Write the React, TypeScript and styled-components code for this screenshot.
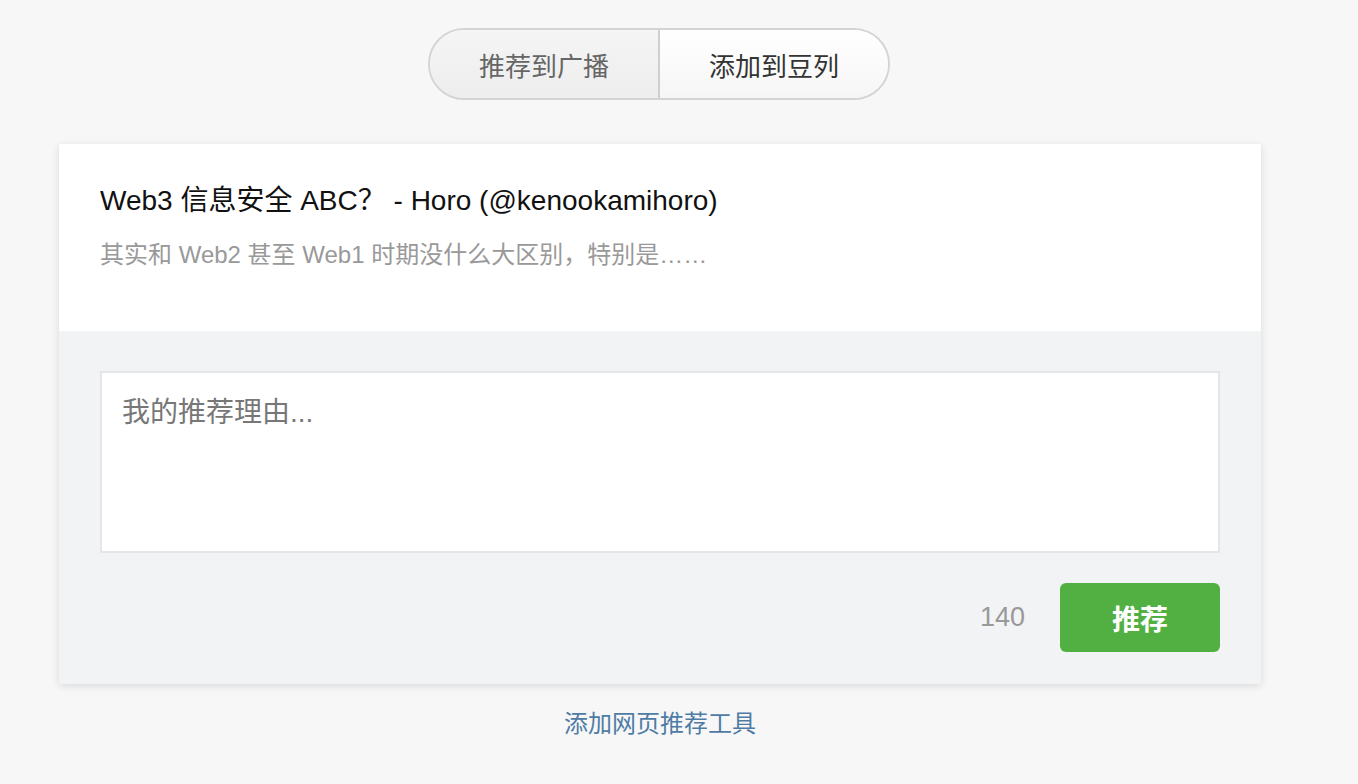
import React, { useState } from 'react'
import styled, { createGlobalStyle } from 'styled-components'

const GlobalStyle = createGlobalStyle`
  html, body {
    margin: 0;
    padding: 0;
    background: #f7f7f7;
    font-family: "Liberation Sans", "Noto Sans CJK SC", sans-serif;
  }
  * { box-sizing: border-box; }
`

const Page = styled.div`
  width: 1320px;
  height: 784px;
  display: flex;
  flex-direction: column;
  align-items: center;
  padding-top: 28px;
`

const Tabs = styled.div`
  display: flex;
  width: 462px;
  height: 72px;
  border: 2px solid #d4d4d4;
  border-radius: 36px;
  overflow: hidden;
  margin-left: -2px;
`

const Tab = styled.button<{ active: boolean }>`
  flex: 1;
  border: none;
  margin: 0;
  padding: 0;
  font-family: inherit;
  font-size: 26px;
  cursor: pointer;
  color: ${(p) => (p.active ? '#333' : '#666')};
  background: ${(p) =>
    p.active ? 'linear-gradient(#fff, #f6f6f6)' : 'linear-gradient(#f5f5f5, #ededed)'};
  & + & {
    border-left: 2px solid #cfcfcf;
  }
`

const Card = styled.div`
  margin-top: 44px;
  width: 1202px;
  background: #f2f3f5;
  box-shadow: 0 2px 8px rgba(0, 0, 0, 0.12);
`

const Preview = styled.div`
  height: 187px;
  background: #fff;
  padding: 39px 41px 0;
`

const Title = styled.div`
  font-size: 28px;
  color: #111;
  line-height: 36px;
`

const Summary = styled.div`
  margin-top: 20px;
  font-size: 24px;
  color: #999;
  line-height: 32px;
`

const Form = styled.div`
  padding: 40px 41px 32px;
`

const Reason = styled.textarea`
  display: block;
  width: 100%;
  height: 182px;
  resize: none;
  border: 2px solid #e3e5e8;
  background: #fff;
  padding: 22px 20px;
  font-family: inherit;
  font-size: 28px;
  line-height: 36px;
  color: #333;
  outline: none;
  &::placeholder {
    color: #777;
  }
`

const Footer = styled.div`
  display: flex;
  justify-content: flex-end;
  align-items: center;
  margin-top: 30px;
  gap: 35px;
`

const Count = styled.span`
  font-size: 27px;
  color: #999;
`

const Submit = styled.button`
  width: 160px;
  height: 69px;
  border: none;
  border-radius: 6px;
  background: #52b043;
  color: #fff;
  font-family: inherit;
  font-size: 28px;
  font-weight: bold;
  cursor: pointer;
`

const ToolLink = styled.a`
  margin-top: 20px;
  font-size: 24px;
  color: #4f7ca5;
  text-decoration: none;
`

export default function App() {
  const [tab, setTab] = useState(1)
  const [text, setText] = useState('')
  return (
    <Page>
      <GlobalStyle />
      <Tabs>
        <Tab active={tab === 0} onClick={() => setTab(0)}>推荐到广播</Tab>
        <Tab active={tab === 1} onClick={() => setTab(1)}>添加到豆列</Tab>
      </Tabs>
      <Card>
        <Preview>
          <Title>Web3 信息安全 ABC？ - Horo (@kenookamihoro)</Title>
          <Summary>其实和 Web2 甚至 Web1 时期没什么大区别，特别是……</Summary>
        </Preview>
        <Form>
          <Reason
            placeholder='我的推荐理由...'
            value={text}
            onChange={(e) => setText(e.target.value)}
          />
          <Footer>
            <Count>{140 - text.length}</Count>
            <Submit>推荐</Submit>
          </Footer>
        </Form>
      </Card>
      <ToolLink href='#'>添加网页推荐工具</ToolLink>
    </Page>
  )
}
